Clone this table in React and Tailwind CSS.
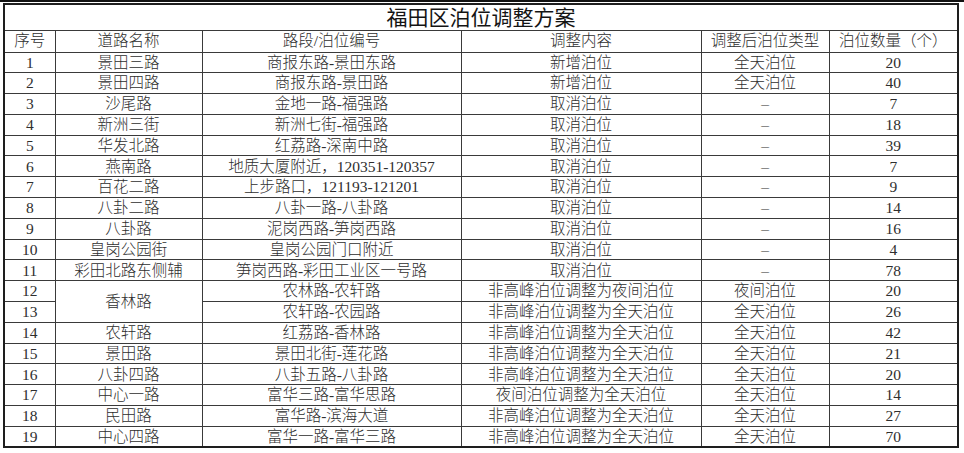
import React from "react";

const rows = [
  ["1", "景田三路", "商报东路-景田东路", "新增泊位", "全天泊位", "20"],
  ["2", "景田四路", "商报东路-景田路", "新增泊位", "全天泊位", "40"],
  ["3", "沙尾路", "金地一路-福强路", "取消泊位", "–", "7"],
  ["4", "新洲三街", "新洲七街-福强路", "取消泊位", "–", "18"],
  ["5", "华发北路", "红荔路-深南中路", "取消泊位", "–", "39"],
  ["6", "燕南路", "地质大厦附近，120351-120357", "取消泊位", "–", "7"],
  ["7", "百花二路", "上步路口，121193-121201", "取消泊位", "–", "9"],
  ["8", "八卦二路", "八卦一路-八卦路", "取消泊位", "–", "14"],
  ["9", "八卦路", "泥岗西路-笋岗西路", "取消泊位", "–", "16"],
  ["10", "皇岗公园街", "皇岗公园门口附近", "取消泊位", "–", "4"],
  ["11", "彩田北路东侧辅", "笋岗西路-彩田工业区一号路", "取消泊位", "–", "78"],
  ["12", "香林路", "农林路-农轩路", "非高峰泊位调整为夜间泊位", "夜间泊位", "20"],
  ["13", null, "农轩路-农园路", "非高峰泊位调整为全天泊位", "全天泊位", "26"],
  ["14", "农轩路", "红荔路-香林路", "非高峰泊位调整为全天泊位", "全天泊位", "42"],
  ["15", "景田路", "景田北街-莲花路", "非高峰泊位调整为全天泊位", "全天泊位", "21"],
  ["16", "八卦四路", "八卦五路-八卦路", "非高峰泊位调整为全天泊位", "全天泊位", "20"],
  ["17", "中心一路", "富华三路-富华思路", "夜间泊位调整为全天泊位", "全天泊位", "14"],
  ["18", "民田路", "富华路-滨海大道", "非高峰泊位调整为全天泊位", "全天泊位", "27"],
  ["19", "中心四路", "富华一路-富华三路", "非高峰泊位调整为全天泊位", "全天泊位", "70"],
];

const cell = "border border-[#3a3a3a] p-0 text-center align-middle leading-none whitespace-nowrap";

export default function App() {
  return (
    <div
      className="w-[964px] h-[453px] bg-white overflow-hidden text-[#2e2e2e] font-light"
      style={{ fontFamily: '"Liberation Serif", "Noto Sans CJK SC", serif' }}
    >
      <div className="h-[2px] w-full bg-[#111]" />
      <table className="ml-[3px] mt-[1px] w-[954px] table-fixed border-collapse border-2 border-[#1e1e1e] text-[15.5px]">
        <colgroup>
          <col className="w-[51px]" />
          <col className="w-[147px]" />
          <col className="w-[259px]" />
          <col className="w-[240px]" />
          <col className="w-[128px]" />
          <col className="w-[129px]" />
        </colgroup>
        <tbody>
          <tr className="h-[26px]">
            <td colSpan={6} className={cell + " text-[21px] text-[#141414] font-normal pt-[2px]"}>
              福田区泊位调整方案
            </td>
          </tr>
          <tr className="h-[22px]">
            <td className={cell}>序号</td>
            <td className={cell}>道路名称</td>
            <td className={cell}>路段/泊位编号</td>
            <td className={cell}>调整内容</td>
            <td className={cell}>调整后泊位类型</td>
            <td className={cell}>泊位数量（个）</td>
          </tr>
          {rows.map((r) => (
            <tr key={r[0]} className="h-[20.8px]">
              <td className={cell}>{r[0]}</td>
              {r[1] !== null && (
                <td className={cell} rowSpan={r[0] === "12" ? 2 : 1}>
                  {r[1]}
                </td>
              )}
              <td className={cell}>{r[2]}</td>
              <td className={cell}>{r[3]}</td>
              <td className={cell}>{r[4]}</td>
              <td className={cell}>{r[5]}</td>
            </tr>
          ))}
        </tbody>
      </table>
    </div>
  );
}
